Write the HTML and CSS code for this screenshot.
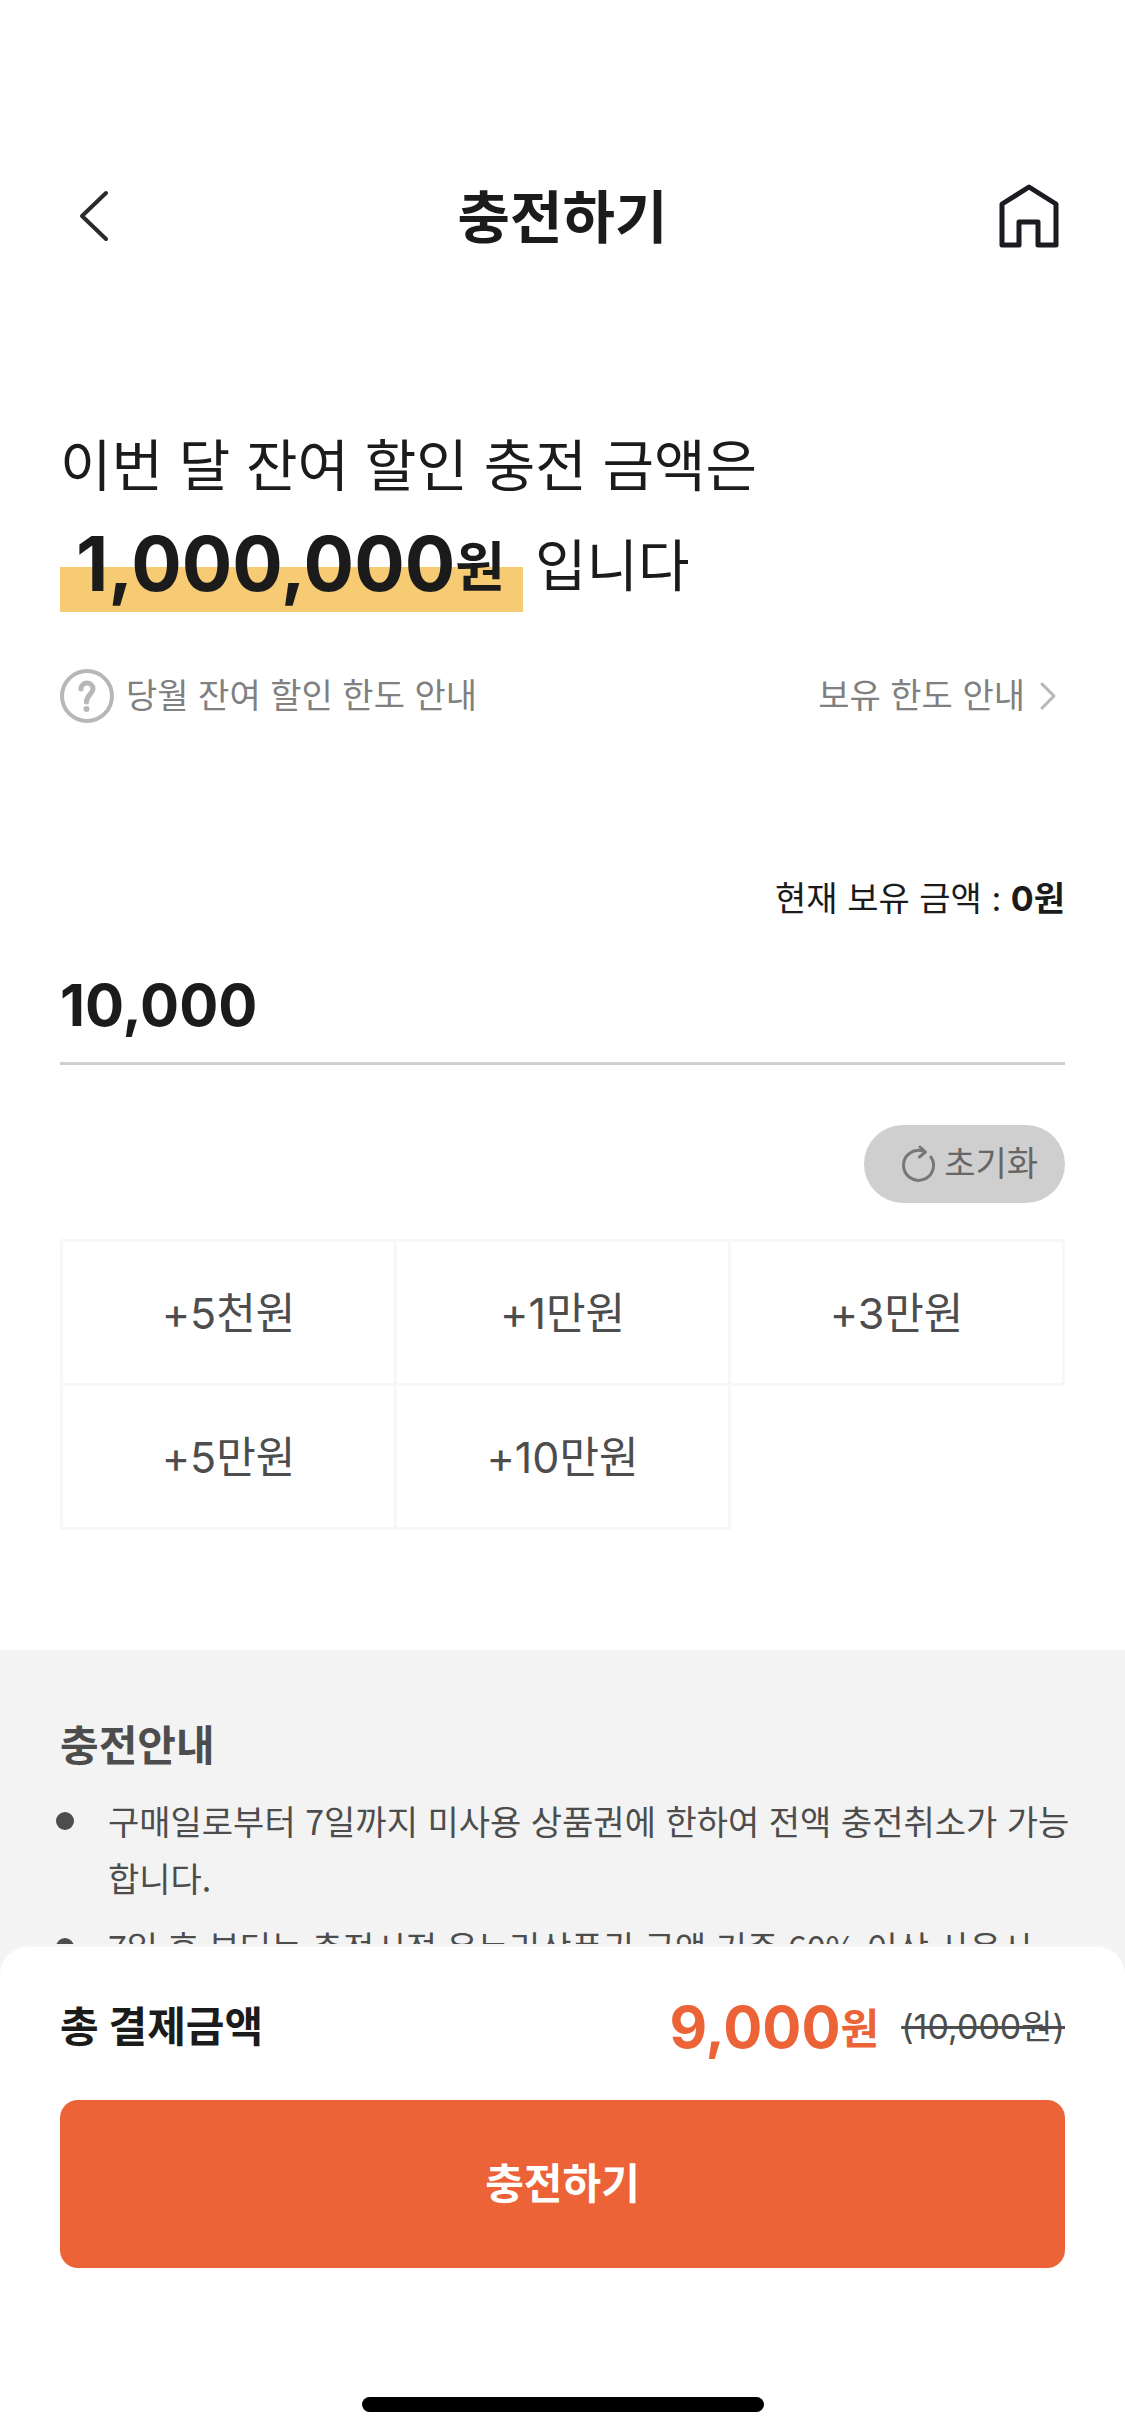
FILE: index.html
```html
<!DOCTYPE html>
<html lang="ko">
<head>
<meta charset="utf-8">
<meta name="viewport" content="width=device-width, initial-scale=1">
<title>충전하기</title>
<link rel="stylesheet" href="styles.css">
</head>
<body>
<div class="app">
  <header class="topbar">
    <button class="icon-button" type="button" aria-label="뒤로">
      <svg width="52" height="56" viewBox="0 0 52 56" fill="none" stroke="#2b2b2b" stroke-width="4" stroke-linecap="round" stroke-linejoin="round"><path d="M42 5 18 28 42 51"/></svg>
    </button>
    <h1 class="topbar-title">충전하기</h1>
    <a class="icon-button icon-button-end" href="#" aria-label="홈">
      <svg width="64" height="68" viewBox="0 0 64 68" fill="none" stroke="#1b1b22" stroke-width="5" stroke-linejoin="round"><path d="M5 63V22L32 5 59 22V63H41V40H22V63Z"/></svg>
    </a>
  </header>

  <main class="content">
    <section class="summary">
      <p class="headline">이번 달 잔여 할인 충전 금액은</p>
      <p class="headline headline-amount"><strong class="highlight">1,000,000<span class="unit unit-large">원</span></strong> 입니다</p>
      <div class="links">
        <a class="help-link" href="#">
          <svg width="54" height="54" viewBox="0 0 54 54" fill="none" stroke="#b7b7b7"><circle cx="27" cy="27" r="25" stroke-width="4"/><path d="M21 20C21 16 24 14 27 14S33 16 33 20C33 24.500 26.500 26 26.500 33" stroke-width="5" stroke-linecap="round"/><circle cx="26.500" cy="40" r="3" fill="#b7b7b7" stroke="none"/></svg>
          당월 잔여 할인 한도 안내
        </a>
        <a class="limit-link" href="#">
          보유 한도 안내
          <svg width="24" height="32" viewBox="0 0 24 32" fill="none" stroke="#b7b7b7" stroke-width="3" stroke-linecap="round" stroke-linejoin="round"><path d="M5 4 17 16 5 28"/></svg>
        </a>
      </div>
    </section>

    <form class="charge">
      <label class="balance" for="amount">현재 보유 금액 : <strong>0원</strong></label>
      <input class="amount" id="amount" type="text" inputmode="numeric" value="10,000">
      <button class="reset" type="reset">
        <svg width="36" height="40" viewBox="0 0 36 40" fill="none" stroke="#777" stroke-width="3" stroke-linecap="round" stroke-linejoin="round"><path d="M31 13A15 15 0 1 1 23 7"/><path d="M20 3 25.500 8 19.500 13"/></svg>
        초기화
      </button>
      <div class="presets">
        <button class="preset" type="button">+5천원</button>
        <button class="preset" type="button">+1만원</button>
        <button class="preset" type="button">+3만원</button>
        <button class="preset" type="button">+5만원</button>
        <button class="preset" type="button">+10만원</button>
      </div>
    </form>

    <section class="notice">
      <h2 class="notice-title">충전안내</h2>
      <ul class="notice-list">
        <li>구매일로부터 7일까지 미사용 상품권에 한하여 전액 충전취소가 가능합니다.</li>
        <li>7일 후 부터는 충전시점 온누리상품권 금액 기준 60% 이상 사용시</li>
      </ul>
    </section>
  </main>

  <footer class="checkout">
    <div class="total">
      <span class="total-label">총 결제금액</span>
      <span class="total-price"><strong class="price">9,000<span class="unit">원</span></strong><del class="price-before">(10,000원)</del></span>
    </div>
    <button class="submit" type="button">충전하기</button>
    <div class="home-indicator"></div>
  </footer>
</div>
</body>
</html>
```
FILE: styles.css
```css
* {
  box-sizing: border-box;
}

body {
  margin: 0;
  background: #fff;
  color: #1b1b1b;
  font-family: Inter, "Noto Sans CJK KR", sans-serif;
  font-size: 34px;
  line-height: 48px;
}

h1, h2, p, ul {
  margin: 0;
  padding: 0;
}

a {
  color: inherit;
  text-decoration: none;
}

button, input {
  margin: 0;
  padding: 0;
  border: 0;
  border-radius: 0;
  background: none;
  color: inherit;
  font: inherit;
}

svg {
  display: block;
  flex: none;
}

.app {
  display: flex;
  flex-direction: column;
  height: 100vh;
}

.topbar {
  display: grid;
  flex: none;
  grid-template-columns: 1fr auto 1fr;
  align-items: center;
  padding: 132px 64px 0;
}

.icon-button {
  display: flex;
  align-items: center;
  justify-self: start;
  height: 168px;
}

.icon-button-end {
  justify-self: end;
}

.topbar-title {
  padding-top: 4px;
  font-size: 57px;
  line-height: 84px;
  font-weight: 700;
}

.content {
  flex: 1;
  min-height: 0;
  overflow-y: auto;
  scrollbar-width: none;
}

.summary {
  padding: 116px 60px 0;
}

.headline {
  font-size: 56px;
  line-height: 100px;
}

.headline-amount {
  display: flex;
  align-items: flex-start;
  gap: 12px;
}

.highlight {
  padding: 0 18px 0 16px;
  font-size: 75px;
  line-height: 96px;
  background: linear-gradient(#f7cb73, #f7cb73) bottom / 100% 45px no-repeat;
}

.unit {
  font-size: 42px;
  line-height: 1;
  vertical-align: 4px;
}

.unit-large {
  font-size: 54px;
}

.links {
  display: flex;
  justify-content: space-between;
  align-items: center;
  margin-top: 53px;
  color: #808080;
}

.help-link, .limit-link {
  display: flex;
  align-items: center;
  gap: 12px;
}

.limit-link {
  padding-right: 4px;
}

.charge {
  display: flex;
  flex-direction: column;
  padding: 152px 60px 120px;
}

.balance {
  text-align: right;
}

.amount {
  width: 100%;
  height: 142px;
  padding: 24px 0 0;
  border-bottom: 3px solid #cfcfcf;
  font-size: 58px;
  font-weight: 700;
  outline: 0;
}

.reset {
  display: flex;
  align-items: center;
  align-self: flex-end;
  gap: 8px;
  height: 78px;
  margin: 60px 0 36px;
  padding: 0 27px 0 36px;
  border-radius: 39px;
  background: #cfcfcf;
  color: #666;
}

.presets {
  display: grid;
  grid-template-columns: repeat(3, 1fr);
  padding: 0 0 3px 3px;
}

.preset {
  height: 147px;
  margin: 0 0 -3px -3px;
  border: 3px solid #f7f7f7;
  color: #4d4d4d;
  font-size: 43px;
}

.notice {
  padding: 66px 48px 60px 60px;
  background: #f3f3f3;
  color: #4d4d4d;
}

.notice-title {
  font-size: 42px;
  line-height: 60px;
  font-weight: 700;
}

.notice-list {
  display: grid;
  gap: 12px;
  margin-top: 16px;
  list-style: none;
  font-family: "Noto Sans CJK KR", sans-serif;
}

.notice-list li {
  position: relative;
  padding-left: 48px;
  line-height: 57px;
  word-break: break-all;
}

.notice-list li::before {
  content: "";
  position: absolute;
  top: 20px;
  left: -4px;
  width: 18px;
  height: 18px;
  border-radius: 50%;
  background: #4d4d4d;
}

.checkout {
  position: relative;
  flex: none;
  margin-top: -30px;
  padding: 0 60px 24px;
  border-top: 3px solid #f7f7f7;
  border-radius: 30px 30px 0 0;
  background: #fff;
}

.total {
  display: flex;
  justify-content: space-between;
  align-items: center;
  height: 153px;
  padding-top: 6px;
}

.total-label {
  font-size: 42px;
  font-weight: 700;
}

.total-price {
  display: flex;
  align-items: center;
  gap: 22px;
}

.price {
  color: #ec6337;
  font-size: 58px;
}

.price-before {
  color: #4d4d4d;
}

.submit {
  display: block;
  width: 100%;
  height: 168px;
  border-radius: 18px;
  background: #ec6337;
  color: #fff;
  font-size: 42px;
  font-weight: 700;
}

.home-indicator {
  width: 40%;
  height: 15px;
  margin: 129px auto 0;
  border-radius: 8px;
  background: #000;
}
```
